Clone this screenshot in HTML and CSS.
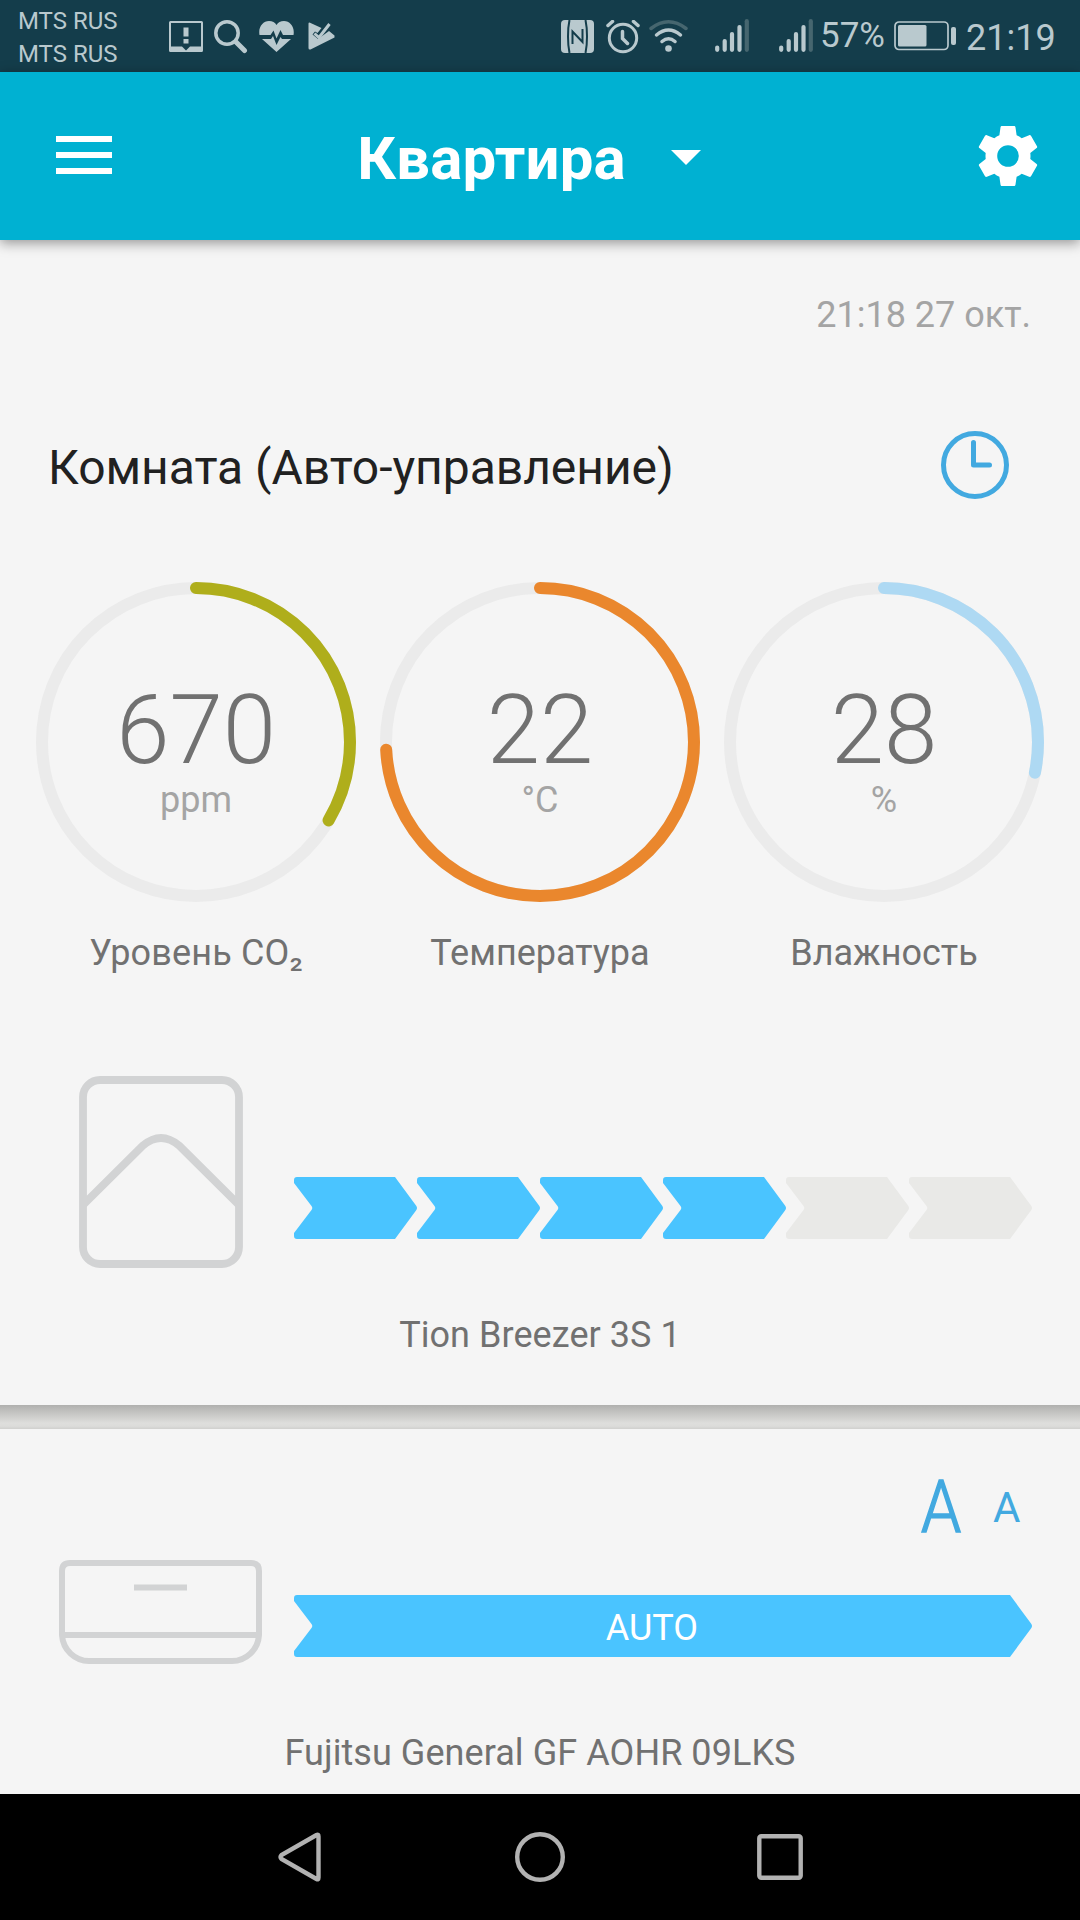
FILE: index.html
```html
<!DOCTYPE html>
<html lang="ru">
<head>
    <meta charset="UTF-8">
    <meta name="viewport" content="width=device-width, initial-scale=1.0">
    <title>Квартира</title>
    <link rel="stylesheet" href="styles.css">
</head>
<body>
    <div class="status-bar">
        <div class="carriers">
            <span>MTS RUS</span>
            <span>MTS RUS</span>
        </div>
        <div class="notifications">
            <svg width="34" height="31" viewBox="0 0 34 31">
                <path fill-rule="evenodd" d="M1.500 0h31a1.500 1.500 0 0 1 1.500 1.500v28a1.500 1.500 0 0 1-1.500 1.500h-31a1.500 1.500 0 0 1-1.500-1.500v-28a1.500 1.500 0 0 1 1.500-1.500zM2 2v23.500h11l4 4 4-4h11v-23.500z"/>
                <path d="M14.500 6.500h5v9h-5zM14.500 18h5v4.500h-5z"/>
            </svg>
            <svg class="search" width="34" height="34" viewBox="0 0 34 34">
                <circle class="line" cx="13" cy="13" r="11.200" stroke-width="3.500"/>
                <path class="line" d="M22 22l8.500 8.500" stroke-width="5"/>
            </svg>
            <svg width="35" height="32" viewBox="0 0 35 32">
                <path d="M.5 14C-1 6 4 0 10 0c3.500 0 6 1.500 7.500 4C19 1.500 21.500 0 25 0c6 0 11 6 9.500 14H24l-2.500-5-4 8.500-3-8-3 4.500z"/>
                <path d="M3 18h9l2-3 3.500 9 4-8 1.500 2H32L17.500 31z"/>
            </svg>
            <svg width="27" height="30" viewBox="0 0 27 30">
                <path d="M1.500 1.500l12 5.500-4 5-2.500-1.500-2.500 3 5.500 4.500L21 10l5.500 4.500v2L2.500 28.500q-2 .5-2-1.500V2.500q0-1 1-1z"/>
                <path class="line butt" d="M6.500 12.500l4.500 4L21.500 3" stroke-width="3"/>
            </svg>
        </div>
        <div class="indicators">
            <svg width="33" height="33" viewBox="0 0 33 33">
                <rect width="33" height="33" rx="4"/>
                <path class="cut" d="M8.500 0C6.500 9 6.500 24 8.500 33M24.500 0C26.500 9 26.500 24 24.500 33"/>
                <path class="cut" d="M11.500 24V11.500L21.500 22V9"/>
            </svg>
            <svg class="alarm" width="34" height="34" viewBox="0 0 34 34">
                <circle class="line" cx="17" cy="18" r="13.700" stroke-width="3"/>
                <path class="line" d="M2 5.500l4.500-4M32 5.500l-4.500-4M16.500 11.500v7l5 5" stroke-width="3.500"/>
            </svg>
            <svg class="wifi" width="39" height="34" viewBox="0 0 39 34">
                <path class="line dim" d="M2 9.500Q19.500-4 37 9.500" stroke-width="3.500"/>
                <path class="line" d="M7.500 16Q19.500 6 31.500 16M13 22.500Q19.500 17 26 22.500" stroke-width="3.500"/>
                <circle cx="19.500" cy="29.500" r="3.300"/>
            </svg>
            <svg class="signal" width="34" height="33" viewBox="0 0 34 33">
                <path class="line" d="M2.200 28.500v2.300M9.700 22v8.800M17 15v15.800M24.500 8v22.800" stroke-width="4.200"/>
                <path class="line dim" d="M31.800 2.200v28.600" stroke-width="4.200"/>
            </svg>
            <svg class="signal-second" width="34" height="33" viewBox="0 0 34 33">
                <path class="line" d="M2.200 28.500v2.300M9.700 22v8.800M17 15v15.800M24.500 8v22.800" stroke-width="4.200"/>
                <path class="line dim" d="M31.800 2.200v28.600" stroke-width="4.200"/>
            </svg>
            <span class="percent">57%</span>
            <svg class="battery" width="62" height="30" viewBox="0 0 62 30">
                <rect class="line" x="1" y="1" width="53" height="27.500" rx="4" stroke-width="1.700"/>
                <rect x="4" y="4" width="28.500" height="21.500" rx="1.500"/>
                <rect x="57" y="6" width="5" height="18" rx="2"/>
            </svg>
            <span class="time">21:19</span>
        </div>
    </div>

    <div class="app-bar">
        <div class="menu">
            <span></span>
            <span></span>
            <span></span>
        </div>
        <div class="home">
            <h1>Квартира</h1>
            <svg width="30" height="15" viewBox="0 0 30 15"><path d="M0 0h30L15 15z"/></svg>
        </div>
        <svg class="gear" width="72" height="72" viewBox="0 0 24 24">
            <path d="M19.430 12.980c.04-.32.07-.64.07-.98s-.03-.66-.07-.98l2.110-1.650c.19-.15.24-.42.12-.64l-2-3.460c-.12-.22-.39-.3-.61-.22l-2.490 1c-.52-.4-1.080-.73-1.690-.98l-.38-2.650C14.460 2.180 14.250 2 14 2h-4c-.25 0-.46.18-.49.42l-.38 2.650c-.61.25-1.170.59-1.690.98l-2.490-1c-.23-.09-.49 0-.61.22l-2 3.460c-.13.22-.07.49.12.64l2.110 1.650c-.04.32-.07.65-.07.98s.03.66.07.98l-2.110 1.650c-.19.15-.24.42-.12.64l2 3.460c.12.22.39.3.61.22l2.490-1c.52.4 1.080.73 1.690.98l.38 2.650c.03.24.24.42.49.42h4c.25 0 .46-.18.49-.42l.38-2.650c.61-.25 1.170-.59 1.690-.98l2.490 1c.23.09.49 0 .61-.22l2-3.460c.12-.22.07-.49-.12-.64l-2.110-1.650zM12 15.600a3.600 3.600 0 1 1 0-7.200 3.600 3.600 0 0 1 0 7.200z"/>
        </svg>
    </div>

    <div class="card room">
        <div class="updated">21:18 27 окт.</div>
        <div class="room-header">
            <h2>Комната (Авто-управление)</h2>
            <svg width="68" height="68" viewBox="0 0 68 68">
                <circle cx="34" cy="34" r="31.500"/>
                <path d="M32.500 11.500v22.500h16"/>
            </svg>
        </div>

        <div class="gauges">
            <div class="gauge co2">
                <div class="dial">
                    <svg width="320" height="320" viewBox="0 0 320 320">
                        <circle class="track" cx="160" cy="160" r="154"/>
                        <circle class="arc" cx="160" cy="160" r="154" pathLength="100" stroke-dasharray="33.500 100"/>
                    </svg>
                    <div class="reading">
                        <div class="value">670</div>
                        <div class="unit">ppm</div>
                    </div>
                </div>
                <div class="label">Уровень CO₂</div>
            </div>
            <div class="gauge temperature">
                <div class="dial">
                    <svg width="320" height="320" viewBox="0 0 320 320">
                        <circle class="track" cx="160" cy="160" r="154"/>
                        <circle class="arc" cx="160" cy="160" r="154" pathLength="100" stroke-dasharray="74.200 100"/>
                    </svg>
                    <div class="reading">
                        <div class="value">22</div>
                        <div class="unit">°C</div>
                    </div>
                </div>
                <div class="label">Температура</div>
            </div>
            <div class="gauge humidity">
                <div class="dial">
                    <svg width="320" height="320" viewBox="0 0 320 320">
                        <circle class="track" cx="160" cy="160" r="154"/>
                        <circle class="arc" cx="160" cy="160" r="154" pathLength="100" stroke-dasharray="28.200 100"/>
                    </svg>
                    <div class="reading">
                        <div class="value">28</div>
                        <div class="unit">%</div>
                    </div>
                </div>
                <div class="label">Влажность</div>
            </div>
        </div>

        <div class="device breezer">
            <svg class="device-icon" width="164" height="192" viewBox="0 0 164 192">
                <rect x="4" y="4" width="156" height="184" rx="17"/>
                <path d="M4 129L64 69.500Q82 54.500 100 69.500L160 129"/>
            </svg>
            <div class="speed">
                <svg class="on" width="123" height="62" viewBox="0 0 123 62"><path d="M3 0H101L122 28.500Q124 31 122 33.500L101 62H3Q0 62 0 59V56L17.500 33Q19 31 17.500 29L0 6V3Q0 0 3 0z"/></svg>
                <svg class="on" width="123" height="62" viewBox="0 0 123 62"><path d="M3 0H101L122 28.500Q124 31 122 33.500L101 62H3Q0 62 0 59V56L17.500 33Q19 31 17.500 29L0 6V3Q0 0 3 0z"/></svg>
                <svg class="on" width="123" height="62" viewBox="0 0 123 62"><path d="M3 0H101L122 28.500Q124 31 122 33.500L101 62H3Q0 62 0 59V56L17.500 33Q19 31 17.500 29L0 6V3Q0 0 3 0z"/></svg>
                <svg class="on" width="123" height="62" viewBox="0 0 123 62"><path d="M3 0H101L122 28.500Q124 31 122 33.500L101 62H3Q0 62 0 59V56L17.500 33Q19 31 17.500 29L0 6V3Q0 0 3 0z"/></svg>
                <svg width="123" height="62" viewBox="0 0 123 62"><path d="M3 0H101L122 28.500Q124 31 122 33.500L101 62H3Q0 62 0 59V56L17.500 33Q19 31 17.500 29L0 6V3Q0 0 3 0z"/></svg>
                <svg width="123" height="62" viewBox="0 0 123 62"><path d="M3 0H101L122 28.500Q124 31 122 33.500L101 62H3Q0 62 0 59V56L17.500 33Q19 31 17.500 29L0 6V3Q0 0 3 0z"/></svg>
            </div>
        </div>
        <div class="device-name">Tion Breezer 3S 1</div>
    </div>

    <div class="divider"></div>

    <div class="card">
        <div class="modes">
            <span class="mode-large">A</span>
            <span class="mode-small">A</span>
        </div>
        <div class="device conditioner">
            <svg class="device-icon" width="203" height="104" viewBox="0 0 203 104">
                <path d="M11 3H192Q200 3 200 11V75C199 90 187 101 173 101H30C16 101 4 90 3 75V11Q3 3 11 3zM3 75H200M75 27.500H128"/>
            </svg>
            <div class="auto">
                <svg width="738" height="62" viewBox="0 0 738 62"><path d="M3 0H716L737 28.500Q739 31 737 33.500L716 62H3Q0 62 0 59V56L17.500 33Q19 31 17.500 29L0 6V3Q0 0 3 0z"/></svg>
                <span>AUTO</span>
            </div>
        </div>
        <div class="device-name">Fujitsu General GF AOHR 09LKS</div>
    </div>

    <div class="nav-bar">
        <svg width="44" height="50" viewBox="0 0 44 50"><path d="M38.500 3Q40.500 2 40.500 4.500V45.500Q40.500 48 38.500 47L3.500 27Q1.500 25 3.500 23z"/></svg>
        <svg width="50" height="50" viewBox="0 0 50 50"><circle cx="25" cy="25" r="22.800"/></svg>
        <svg width="46" height="46" viewBox="0 0 46 46"><rect x="2.300" y="2.300" width="41.400" height="41.400" rx="2"/></svg>
    </div>
</body>
</html>
```
FILE: styles.css
```css
* {
    box-sizing: border-box;
}
body {
    margin: 0;
    width: 1080px;
    height: 1920px;
    overflow: hidden;
    display: flex;
    flex-direction: column;
    background-color: #f5f5f5;
    color: #717171;
    font-family: Roboto, "Noto Sans", sans-serif;
    font-size: 36px;
    line-height: 42px;
}
svg {
    display: block;
    flex: none;
}
h1, h2 {
    margin: 0;
}

/* status bar */
.status-bar {
    display: flex;
    align-items: flex-start;
    height: 72px;
    flex: none;
    padding-left: 18px;
    background-color: #143d4b;
    color: #b9c9ce;
    fill: #b9c9ce;
}
.status-bar .line {
    fill: none;
    stroke: #b9c9ce;
    stroke-linecap: round;
}
.status-bar .butt {
    stroke-linecap: butt;
}
.status-bar .dim {
    stroke: #46666f;
}
.status-bar .cut {
    fill: none;
    stroke: #143d4b;
    stroke-width: 2;
}
.carriers {
    display: flex;
    flex-direction: column;
    width: 151px;
    padding-top: 5px;
    font-size: 24px;
    line-height: 33px;
}
.notifications {
    display: flex;
    gap: 11px;
    width: 392px;
    padding-top: 21px;
}
.search {
    margin-top: -1px;
}
.notifications svg:last-child {
    margin-left: 3px;
}
.indicators {
    display: flex;
    padding-top: 20px;
}
.alarm {
    margin-left: 12px;
}
.wifi {
    margin: -1px 0 0 9px;
}
.signal {
    margin: -1px 0 0 27px;
}
.signal-second {
    margin: -1px 0 0 30px;
}
.percent {
    width: 73px;
    margin: -5px 0 0 7px;
    font-size: 35px;
}
.battery {
    margin: 1px 0 0 1px;
}
.time {
    margin: -3px 0 0 10px;
}

/* app bar */
.app-bar {
    display: flex;
    align-items: center;
    justify-content: space-between;
    height: 168px;
    flex: none;
    padding: 0 36px 0 56px;
    background-color: #00b1d2;
    color: #fff;
    fill: #fff;
    box-shadow: 0 3px 12px rgba(0, 0, 0, 0.4);
    z-index: 1;
}
.menu {
    display: flex;
    flex-direction: column;
    gap: 10px;
    width: 56px;
    margin-top: -2px;
}
.menu span {
    height: 6px;
    background-color: #fff;
}
.home {
    display: flex;
    align-items: center;
    gap: 45px;
    margin-right: 26px;
}
.home svg {
    margin-top: 2px;
}
.home h1 {
    font-size: 60px;
    line-height: 70px;
    font-weight: bold;
    letter-spacing: 0.15px;
    padding-top: 5px;
}

/* room */
.card {
    flex: none;
}
.room {
    height: 1165px;
    padding-top: 54px;
}
.updated {
    padding-right: 49px;
    text-align: right;
    color: #a4a4a4;
}
.room-header {
    display: flex;
    align-items: center;
    justify-content: space-between;
    height: 68px;
    margin-top: 95px;
    padding: 0 71px 0 48px;
}
.room-header h2 {
    font-size: 48px;
    line-height: 58px;
    font-weight: normal;
    letter-spacing: -0.04px;
    color: #212121;
    padding-top: 6px;
}
.room-header svg {
    fill: none;
    stroke: #42a9e0;
    stroke-width: 5;
    stroke-linecap: round;
    stroke-linejoin: round;
}

.gauges {
    display: flex;
    gap: 24px;
    margin-top: 83px;
    padding-left: 36px;
}
.gauge {
    width: 320px;
    text-align: center;
}
.dial {
    display: grid;
    height: 320px;
}
.dial svg,
.reading {
    grid-area: 1 / 1;
}
.dial circle {
    fill: none;
    stroke-width: 12;
}
.track {
    stroke: #ebebeb;
}
.arc {
    stroke-linecap: round;
    transform: rotate(-90deg);
    transform-origin: center;
}
.co2 .arc {
    stroke: #afae1b;
}
.temperature .arc {
    stroke: #ea872d;
}
.humidity .arc {
    stroke: #aed9f3;
}
.reading {
    padding-top: 99px;
}
.value {
    font-size: 96px;
    line-height: 98px;
    font-weight: 300;
}
.unit {
    color: #a4a4a4;
}
.label {
    margin-top: 30px;
}
.co2 .label {
    letter-spacing: 0.15px;
}

/* devices */
.device {
    display: flex;
}
.device-icon {
    fill: none;
    stroke: #d2d3d4;
    stroke-width: 6;
}
.breezer {
    margin-top: 102px;
    padding-left: 79px;
}
.breezer .device-icon {
    stroke-width: 7.8;
}
.speed {
    display: flex;
    margin: 101px 0 0 51px;
    fill: #e9e9e7;
}
.speed .on,
.auto svg {
    fill: #4ac4ff;
}
.device-name {
    margin-top: 46px;
    text-align: center;
    letter-spacing: 0.06px;
}
.divider {
    height: 24px;
    flex: none;
    background: linear-gradient(#b0b0ae, #c6c6c4 35%, #dededc 75%, #dcdcda 88%, #d0d0ce);
}
.modes {
    display: flex;
    align-items: flex-start;
    height: 131px;
    padding: 44px 0 0 918px;
    color: #42a9e0;
}
.mode-large {
    width: 48px;
    font-size: 73px;
    line-height: 68px;
    font-weight: 300;
    transform: scaleX(0.88);
    -webkit-text-stroke: 1.6px #42a9e0;
}
.mode-small {
    margin-left: 27px;
    font-size: 42px;
    line-height: 70px;
}
.conditioner {
    padding-left: 59px;
}
.auto {
    display: grid;
    place-items: center;
    height: 62px;
    margin: 35px 0 0 32px;
    color: #fff;
}
.auto svg,
.auto span {
    grid-area: 1 / 1;
}
.auto span {
    padding: 4px 22px 0 0;
}
.conditioner + .device-name {
    margin-top: 68px;
}

/* navigation bar */
.nav-bar {
    display: flex;
    align-items: center;
    justify-content: space-between;
    height: 126px;
    margin-top: auto;
    flex: none;
    padding: 0 277px 0 278px;
    background-color: #000;
    fill: none;
    stroke: #b2b2b2;
    stroke-width: 4.4;
}
```
